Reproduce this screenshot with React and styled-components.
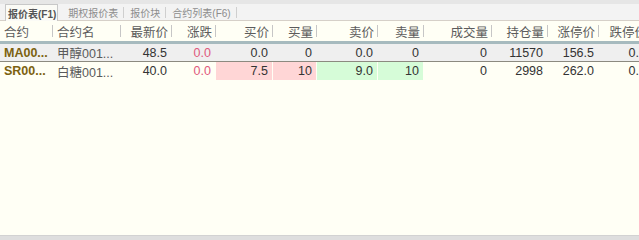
import React from "react"
import styled, { createGlobalStyle } from "styled-components"

const GlobalStyle = createGlobalStyle`
  html, body {
    margin: 0;
    padding: 0;
    background: #fffff5;
  }
  #root {
    height: 100vh;
  }
`

const COLS = [53, 68, 51, 44, 57, 44, 61, 46, 68, 56, 51, 52]
const grid = COLS.map((w) => `${w}px`).join(" ")

const Page = styled.div`
  height: 100vh;
  display: flex;
  flex-direction: column;
  overflow: hidden;
  font-family: "Liberation Sans", "Noto Sans CJK SC", sans-serif;
  background: #fffff5;
`

const TopStrip = styled.div`
  height: 4px;
  background: #e6e6e6;
  flex: none;
`

const TabBar = styled.div`
  height: 16px;
  flex: none;
  display: flex;
  align-items: stretch;
  padding-left: 5px;
  background: #f3f3f3;
  border-bottom: 1px solid #d6d0c8;
`

const Tab = styled.div`
  display: flex;
  align-items: center;
  font-size: 10px;
  white-space: nowrap;
  color: ${(p) => (p.$active ? "#555" : "#8c8c8c")};
  font-weight: ${(p) => (p.$active ? "bold" : "normal")};
  background: ${(p) => (p.$active ? "#fbfbf6" : "transparent")};
  border: 1px solid ${(p) => (p.$active ? "#c8c8c8" : "transparent")};
  border-bottom: none;
  padding: 0 ${(p) => (p.$active ? "1px" : "4px")} 0 ${(p) => (p.$active ? "2px" : "5px")};
  margin-right: ${(p) => (p.$active ? "4px" : "0")};
  height: ${(p) => (p.$active ? "17px" : "16px")};
  box-sizing: border-box;
`

const TabTick = styled.span`
  width: 1px;
  height: 11px;
  background: #cfcfcf;
  align-self: center;
`

const Table = styled.div`
  width: max-content;
  display: flex;
  flex-direction: column;
`

const HeaderRow = styled.div`
  display: grid;
  grid-template-columns: ${grid};
  height: 20px;
  border-bottom: 3px solid #a6babe;
  background: #fffff5;
`

const HeaderCell = styled.div`
  display: flex;
  align-items: center;
  font-size: 12.5px;
  color: #5c5c5c;
`

const HeaderLabel = styled.span`
  flex: 1;
  text-align: ${(p) => p.$align};
  padding: 0 3px 0 ${(p) => (p.$align === "left" ? "4px" : "0")};
  white-space: nowrap;
`

const HeaderTick = styled.span`
  width: 1px;
  height: 12px;
  background: #c6c6c6;
  flex: none;
`

const Row = styled.div`
  display: grid;
  grid-template-columns: ${grid};
  height: ${(p) => (p.$selected ? "17px" : "18px")};
  background: ${(p) => (p.$selected ? "#efefef" : "#fffff5")};
  border-bottom: ${(p) => (p.$selected ? "1px solid #8c8a80" : "none")};
`

const Cell = styled.div`
  display: flex;
  align-items: center;
  justify-content: ${(p) => (p.$align === "left" ? "flex-start" : "flex-end")};
  padding: 0 4px 0 ${(p) => (p.$align === "left" ? "4px" : "0")};
  font-size: 12.5px;
  white-space: nowrap;
  overflow: hidden;
  color: ${(p) => p.$color || "#333"};
  font-weight: ${(p) => (p.$bold ? "bold" : "normal")};
  background: ${(p) => p.$bg || "transparent"};
  background-clip: padding-box;
  border-right: 1px solid transparent;
  box-sizing: border-box;
`

const Filler = styled.div`
  flex: 1;
  background: #fffff5;
`

const BottomBar = styled.div`
  height: 4px;
  flex: none;
  background: #dedede;
  border-top: 1px solid #d2d2d2;
`

const tabs = [
  { label: "报价表(F1)", active: true },
  { label: "期权报价表" },
  { label: "报价块" },
  { label: "合约列表(F6)" },
]

const headers = [
  { label: "合约", align: "left" },
  { label: "合约名", align: "left" },
  { label: "最新价" },
  { label: "涨跌" },
  { label: "买价" },
  { label: "买量" },
  { label: "卖价" },
  { label: "卖量" },
  { label: "成交量" },
  { label: "持仓量" },
  { label: "涨停价" },
  { label: "跌停价" },
]

const rows = [
  {
    selected: true,
    code: "MA00...",
    name: "甲醇001...",
    last: "48.5",
    change: "0.0",
    bid: "0.0",
    bidVol: "0",
    ask: "0.0",
    askVol: "0",
    volume: "0",
    oi: "11570",
    upper: "156.5",
    lower: "0.0",
  },
  {
    code: "SR00...",
    name: "白糖001...",
    last: "40.0",
    change: "0.0",
    bid: "7.5",
    bidVol: "10",
    ask: "9.0",
    askVol: "10",
    volume: "0",
    oi: "2998",
    upper: "262.0",
    lower: "0.0",
    pink: true,
  },
]

const PINK = "#ffd6d6"
const GREEN = "#d6fcd8"

export default function App() {
  return (
    <Page>
      <GlobalStyle />
      <TopStrip />
      <TabBar>
        {tabs.map((t) => (
          <React.Fragment key={t.label}>
            <Tab $active={t.active}>{t.label}</Tab>
            {!t.active && <TabTick />}
          </React.Fragment>
        ))}
      </TabBar>
      <Table>
        <HeaderRow>
          {headers.map((h) => (
            <HeaderCell key={h.label}>
              <HeaderLabel $align={h.align || "right"}>{h.label}</HeaderLabel>
              <HeaderTick />
            </HeaderCell>
          ))}
        </HeaderRow>
        {rows.map((r) => (
          <Row key={r.code} $selected={r.selected}>
            <Cell $align="left" $bold $color="#7c6210">{r.code}</Cell>
            <Cell $align="left" $color="#5a5a5a">{r.name}</Cell>
            <Cell>{r.last}</Cell>
            <Cell $color="#e0587c">{r.change}</Cell>
            <Cell $bg={r.pink && PINK}>{r.bid}</Cell>
            <Cell $bg={r.pink && PINK}>{r.bidVol}</Cell>
            <Cell $bg={r.pink && GREEN}>{r.ask}</Cell>
            <Cell $bg={r.pink && GREEN}>{r.askVol}</Cell>
            <Cell>{r.volume}</Cell>
            <Cell>{r.oi}</Cell>
            <Cell>{r.upper}</Cell>
            <Cell>{r.lower}</Cell>
          </Row>
        ))}
      </Table>
      <Filler />
      <BottomBar />
    </Page>
  )
}
